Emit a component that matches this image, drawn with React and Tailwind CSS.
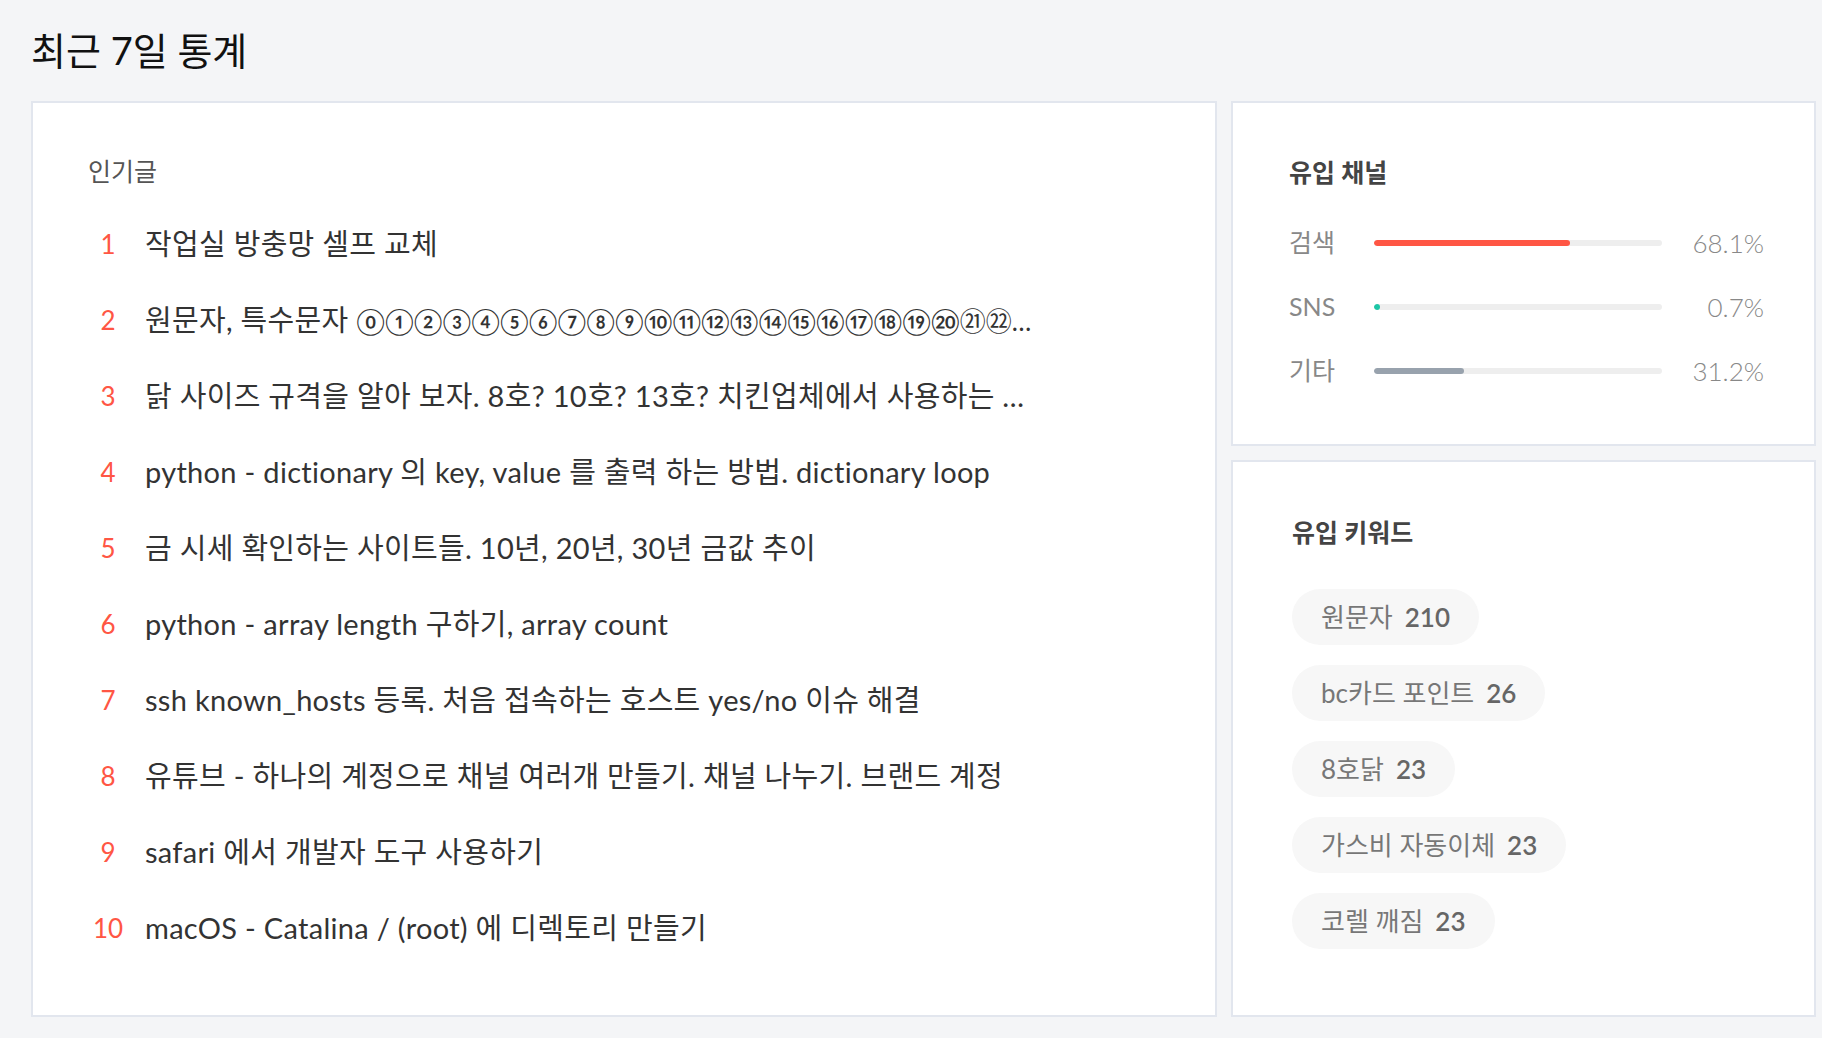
import React from 'react';

const posts = [
  { text: '작업실 방충망 셀프 교체' },
  { text: '원문자, 특수문자 ', tail: '⓪①②③④⑤⑥⑦⑧⑨⑩⑪⑫⑬⑭⑮⑯⑰⑱⑲⑳㉑㉒…' },
  { text: '닭 사이즈 규격을 알아 보자. 8호? 10호? 13호? 치킨업체에서 사용하는 …' },
  { text: 'python - dictionary 의 key, value 를 출력 하는 방법. dictionary loop' },
  { text: '금 시세 확인하는 사이트들. 10년, 20년, 30년 금값 추이' },
  { text: 'python - array length 구하기, array count' },
  { text: 'ssh known_hosts 등록. 처음 접속하는 호스트 yes/no 이슈 해결' },
  { text: '유튜브 - 하나의 계정으로 채널 여러개 만들기. 채널 나누기. 브랜드 계정' },
  { text: 'safari 에서 개발자 도구 사용하기' },
  { text: 'macOS - Catalina / (root) 에 디렉토리 만들기' },
];

const channels = [
  { name: '검색', value: 68.1, color: 'bg-[#ff5644]' },
  { name: 'SNS', value: 0.7, color: 'bg-[#1cc6a6]' },
  { name: '기타', value: 31.2, color: 'bg-[#98a2ad]' },
];

const keywords = [
  { word: '원문자', count: 210 },
  { word: 'bc카드 포인트', count: 26 },
  { word: '8호닭', count: 23 },
  { word: '가스비 자동이체', count: 23 },
  { word: '코렐 깨짐', count: 23 },
];

export default function App() {
  return (
    <div className="min-h-screen bg-[#f4f5f7] pl-[31px] pr-[6px] pb-[21px] font-['Lato','Noto_Sans_CJK_KR',sans-serif]">
      <h1 className="pt-[28px] mb-[28px] text-[38px] leading-[45px] text-[#111] font-normal">최근 7일 통계</h1>

      <div className="flex gap-[14px] items-stretch">
        {/* 인기글 */}
        <div className="w-[1186px] bg-white border-2 border-[#e2e6ee] pl-[55px] pt-[52px] pb-[49px]">
          <h2 className="text-[25px] leading-[32px] font-normal text-[#555]">인기글</h2>
          <ul className="mt-[19px]">
            {posts.map((p, idx) => (
              <li key={idx} className="flex items-center h-[76px] whitespace-nowrap">
                <span className="w-[40px] text-center text-[26px] text-[#ff5644]">{idx + 1}</span>
                <span className="ml-[17px] text-[29px] tracking-[0.3px] text-[#333]">
                  {p.text}
                  {p.tail && <span className="text-[26px] tracking-normal">{p.tail}</span>}
                </span>
              </li>
            ))}
          </ul>
        </div>

        <div className="flex-1 flex flex-col gap-[14px]">
          {/* 유입 채널 */}
          <div className="bg-white border-2 border-[#e2e6ee] pl-[56px] pr-[50px] pt-[53px] pb-[41px]">
            <h2 className="text-[25px] leading-[32px] font-semibold text-[#444]">유입 채널</h2>
            <div className="mt-[23px]">
              {channels.map((ch) => (
                <div key={ch.name} className="flex items-center h-[64px]">
                  <span className="w-[85px] text-[25px] text-[#888]">{ch.name}</span>
                  <div className="flex-1 h-[6px] rounded-full bg-[#eeeeee] overflow-hidden">
                    <div
                      className={`h-full rounded-full ${ch.color}`}
                      style={{ width: `${Math.max(ch.value, 2)}%` }}
                    />
                  </div>
                  <span className="w-[102px] text-right text-[26px] font-light text-[#888]">{ch.value}%</span>
                </div>
              ))}
            </div>
          </div>

          {/* 유입 키워드 */}
          <div className="flex-1 bg-white border-2 border-[#e2e6ee] pl-[59px] pt-[54px]">
            <h2 className="text-[25px] leading-[32px] font-semibold text-[#444]">유입 키워드</h2>
            <div className="mt-[41px] flex flex-col items-start gap-[20px]">
              {keywords.map((kw) => (
                <div key={kw.word} className="h-[56px] px-[29px] rounded-full bg-[#f7f7f7] flex items-center text-[26px] whitespace-nowrap">
                  <span className="text-[#777]">{kw.word}</span>
                  <span className="ml-[12px] font-semibold text-[#666]">{kw.count}</span>
                </div>
              ))}
            </div>
          </div>
        </div>
      </div>
    </div>
  );
}
